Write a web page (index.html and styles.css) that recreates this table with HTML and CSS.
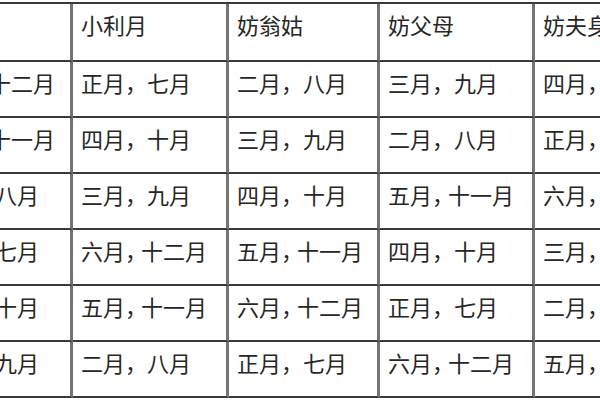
FILE: index.html
```html
<!DOCTYPE html>
<html lang="zh-CN">
<head>
<meta charset="utf-8">
<title>嫁娶月份表</title>
<link rel="stylesheet" href="styles.css">
</head>
<body>
<div class="frame">
  <div class="table">
    <div class="cell head">大利月</div>
    <div class="cell head">小利月</div>
    <div class="cell head">妨翁姑</div>
    <div class="cell head">妨父母</div>
    <div class="cell head">妨夫身</div>
    <div class="cell head">妨女身</div>

    <div class="cell">六月<span class="nc">，</span>十二月</div>
    <div class="cell">正月，七月</div>
    <div class="cell">二月，八月</div>
    <div class="cell">三月，九月</div>
    <div class="cell">四月，十月</div>
    <div class="cell">五月<span class="nc">，</span>十一月</div>

    <div class="cell">五月<span class="nc">，</span>十一月</div>
    <div class="cell">四月，十月</div>
    <div class="cell">三月，九月</div>
    <div class="cell">二月，八月</div>
    <div class="cell">正月，七月</div>
    <div class="cell">六月<span class="nc">，</span>十二月</div>

    <div class="cell">二月，八月</div>
    <div class="cell">三月，九月</div>
    <div class="cell">四月，十月</div>
    <div class="cell">五月<span class="nc">，</span>十一月</div>
    <div class="cell">六月<span class="nc">，</span>十二月</div>
    <div class="cell">正月，七月</div>

    <div class="cell">正月，七月</div>
    <div class="cell">六月<span class="nc">，</span>十二月</div>
    <div class="cell">五月<span class="nc">，</span>十一月</div>
    <div class="cell">四月，十月</div>
    <div class="cell">三月，九月</div>
    <div class="cell">二月，八月</div>

    <div class="cell">四月，十月</div>
    <div class="cell">五月<span class="nc">，</span>十一月</div>
    <div class="cell">六月<span class="nc">，</span>十二月</div>
    <div class="cell">正月，七月</div>
    <div class="cell">二月，八月</div>
    <div class="cell">三月，九月</div>

    <div class="cell">三月，九月</div>
    <div class="cell">二月，八月</div>
    <div class="cell">正月，七月</div>
    <div class="cell">六月<span class="nc">，</span>十二月</div>
    <div class="cell">五月<span class="nc">，</span>十一月</div>
    <div class="cell">四月，十月</div>
  </div>
</div>
</body>
</html>
```

FILE: styles.css
```css
html, body {
  margin: 0;
  padding: 0;
  background: #ffffff;
}

.frame {
  width: 600px;
  height: 400px;
  overflow: hidden;
  padding-top: 2px;
  box-sizing: border-box;
  background: #ffffff;
}

.table {
  display: grid;
  grid-template-columns: 152px 156px 151px 155px 155px 155px;
  grid-template-rows: 58px repeat(6, 56px);
  width: max-content;
  margin-left: -82px;
  border-top: 2px solid #3a3a3a;
  border-left: 3px solid #747474;
  font-family: "Noto Sans CJK SC", "Noto Sans CJK JP", sans-serif;
  font-size: 22px;
  line-height: 22px;
  color: #262626;
}

.cell {
  box-sizing: border-box;
  padding: 9px 0 0 8px;
  border-right: 3px solid #747474;
  border-bottom: 2px solid #3a3a3a;
  white-space: nowrap;
  overflow: hidden;
}

.nc {
  letter-spacing: -6px;
}
```
